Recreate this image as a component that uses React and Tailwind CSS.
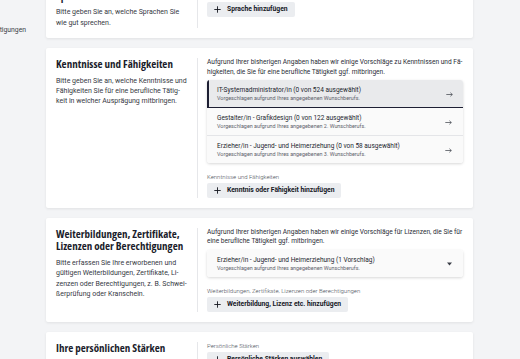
import React from 'react';

const Plus = () => (
    <svg width="7" height="7" viewBox="0 0 7 7" fill="none">
        <path d="M3.5 0.3v6.4M0.3 3.5h6.4" stroke="currentColor" strokeWidth="0.9" />
    </svg>
);

const Arrow = () => (
    <svg width="7" height="5" viewBox="0 0 7 5" fill="none">
        <path d="M0.3 2.5h6M4.4 0.7L6.3 2.5L4.4 4.3" stroke="currentColor" strokeWidth="0.7" />
    </svg>
);

const Caret = () => (
    <svg width="5" height="4" viewBox="0 0 5 4">
        <path d="M0 0.5h5L2.5 3.5z" fill="currentColor" />
    </svg>
);

const AddButton = ({ children }) => (
    <button className="flex items-center gap-[6px] h-[15px] pl-[7px] pr-[7px] rounded-[2px] bg-[#ebedf0] text-[#15171f] text-[6.75px] font-bold">
        <Plus />
        {children}
    </button>
);

const Label = ({ children }) => (
    <p className="text-[6px] leading-[8px] font-light text-[#4b4f58]">{children}</p>
);

const Section = ({ title, text, children }) => (
    <section className="flex bg-white px-[10px] py-[10px] rounded-[2px] shadow-[0_1px_3px_rgba(0,0,0,0.08)]">
        <div className="w-[141px] shrink-0 pr-[10px]">
            <h2 className="font-['Open_Sans',sans-serif] [font-stretch:75%] font-bold text-[11px] leading-[12.4px] text-[#1b1d2b]">
                {title}
            </h2>
            {text && <p className="mt-[5px] text-[7px] leading-[10.4px] text-[#353943]">{text}</p>}
        </div>
        <div className="flex-1 border-l border-[#e6e7ea] pl-[9px]">{children}</div>
    </section>
);

const Suggestion = ({ title, sub, active, icon }) => (
    <div
        className={
            active
                ? 'flex items-center justify-between bg-[#e9eaec] border-l-2 border-[#1d1f33] pl-[8px] pr-[10px] pt-[6px] pb-[5px]'
                : 'flex items-center justify-between bg-[#fafafa] pl-[10px] pr-[11px] pt-[6px] pb-[5px]'
        }
    >
        <div>
            <p className="text-[6.5px] leading-[8px] text-[#22252e]">{title}</p>
            <p className="text-[5.4px] leading-[8px] text-[#5d616a]">{sub}</p>
        </div>
        <span className="text-[#3a3d46]">{icon}</span>
    </div>
);

const intro = 'text-[6.6px] leading-[9.4px] text-[#2a2d36]';

export default function App() {
    return (
        <div className="flex h-[359px] overflow-hidden bg-[#f3f4f6] font-['Roboto',sans-serif]">
            <aside className="w-[46px] shrink-0 overflow-hidden pt-[25px]">
                <div className="flex justify-end pr-[20px] whitespace-nowrap text-[6.8px] leading-[10px] text-[#3a3d46]">
                    Berechtigungen
                </div>
            </aside>

            <main className="w-[427px] shrink-0 -mt-[20px] flex flex-col gap-[10px]">
                <Section
                    title="Sprachen"
                    text={<>Bitte geben Sie an, welche Sprachen Sie<br />wie gut sprechen.</>}
                >
                    <div className="pt-[2px]">
                        <Label>Sprachen</Label>
                        <div className="mt-[2px]">
                            <AddButton>Sprache hinzufügen</AddButton>
                        </div>
                    </div>
                </Section>

                <Section
                    title="Kenntnisse und Fähigkeiten"
                    text={
                        <>
                            Bitte geben Sie an, welche Kenntnisse und<br />
                            Fähigkeiten Sie für eine berufliche Tätig-<br />
                            keit in welcher Ausprägung mitbringen.
                        </>
                    }
                >
                    <p className={intro}>
                        Aufgrund Ihrer bisherigen Angaben haben wir einige Vorschläge zu Kenntnissen und Fä-<br />
                        higkeiten, die Sie für eine berufliche Tätigkeit ggf. mitbringen.
                    </p>
                    <div className="mt-[3px] rounded-[3px] overflow-hidden shadow-[0_1px_3px_rgba(0,0,0,0.16)] divide-y divide-[#e4e5e8]">
                        <Suggestion
                            active
                            title="IT-Systemadministrator/in (0 von 524 ausgewählt)"
                            sub="Vorgeschlagen aufgrund Ihres angegebenen Wunschberufs."
                            icon={<Arrow />}
                        />
                        <Suggestion
                            title="Gestalter/in - Grafikdesign (0 von 122 ausgewählt)"
                            sub="Vorgeschlagen aufgrund Ihres angegebenen 2. Wunschberufs."
                            icon={<Arrow />}
                        />
                        <Suggestion
                            title="Erzieher/in - Jugend- und Heimerziehung (0 von 58 ausgewählt)"
                            sub="Vorgeschlagen aufgrund Ihres angegebenen 3. Wunschberufs."
                            icon={<Arrow />}
                        />
                    </div>
                    <div className="mt-[10px]">
                        <Label>Kenntnisse und Fähigkeiten</Label>
                        <div className="mt-[2px]">
                            <AddButton>Kenntnis oder Fähigkeit hinzufügen</AddButton>
                        </div>
                    </div>
                </Section>

                <Section
                    title={<>Weiterbildungen, Zertifikate,<br />Lizenzen oder Berechtigungen</>}
                    text={
                        <>
                            Bitte erfassen Sie Ihre erworbenen und<br />
                            gültigen Weiterbildungen, Zertifikate, Li-<br />
                            zenzen oder Berechtigungen, z. B. Schwei-<br />
                            ßerprüfung oder Kranschein.
                        </>
                    }
                >
                    <p className={intro}>
                        Aufgrund Ihrer bisherigen Angaben haben wir einige Vorschläge für Lizenzen, die Sie für<br />
                        eine berufliche Tätigkeit ggf. mitbringen.
                    </p>
                    <div className="mt-[3px] rounded-[3px] overflow-hidden shadow-[0_1px_3px_rgba(0,0,0,0.16)]">
                        <Suggestion
                            title="Erzieher/in - Jugend- und Heimerziehung (1 Vorschlag)"
                            sub="Vorgeschlagen aufgrund Ihres angegebenen Wunschberufs."
                            icon={<Caret />}
                        />
                    </div>
                    <div className="mt-[10px]">
                        <Label>Weiterbildungen, Zertifikate, Lizenzen oder Berechtigungen</Label>
                        <div className="mt-[2px]">
                            <AddButton>Weiterbildung, Lizenz etc. hinzufügen</AddButton>
                        </div>
                    </div>
                </Section>

                <Section title="Ihre persönlichen Stärken">
                    <Label>Persönliche Stärken</Label>
                    <div className="mt-[2px]">
                        <AddButton>Persönliche Stärken auswählen</AddButton>
                    </div>
                </Section>
            </main>
        </div>
    );
}
